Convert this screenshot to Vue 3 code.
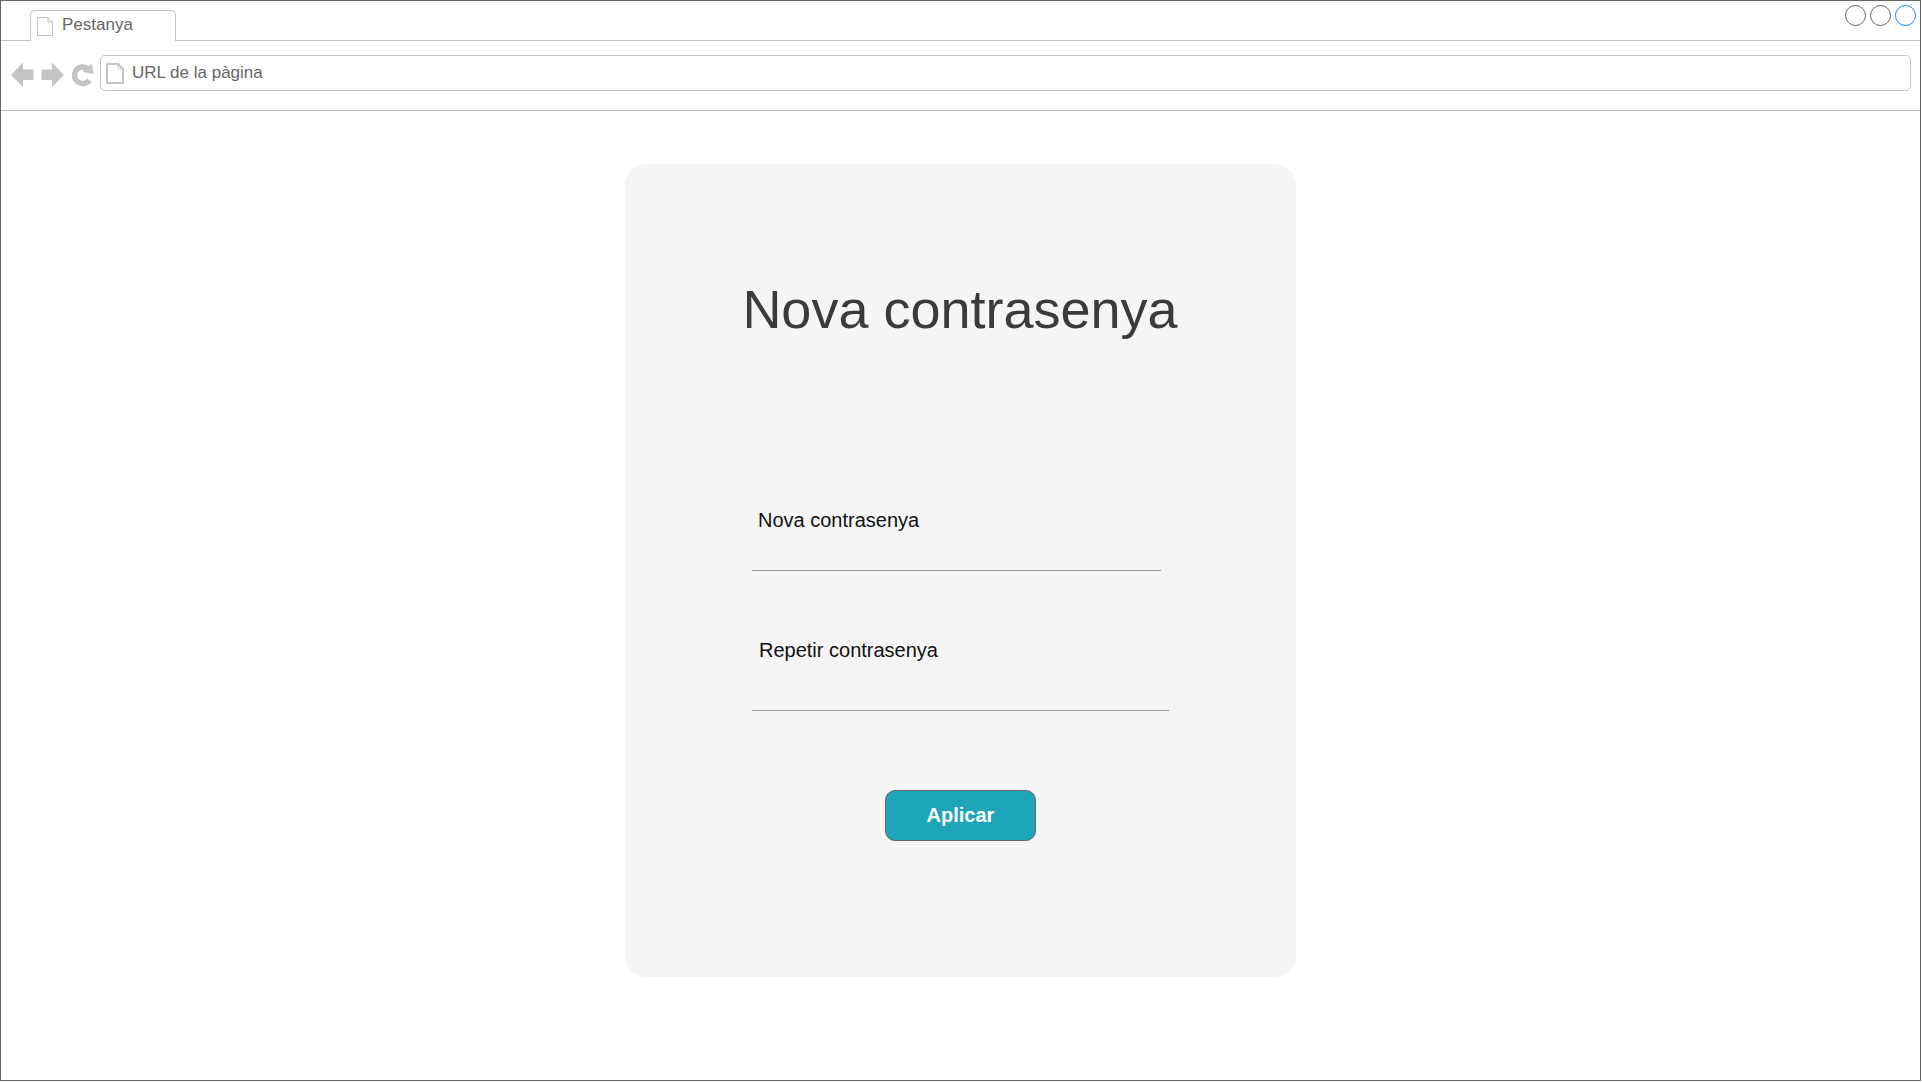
<script setup>
import { ref } from 'vue'

const url = ref('URL de la pàgina')
const password = ref('')
const repeated = ref('')
</script>

<template>
  <div class="window">
    <header>
      <div class="tab-bar">
        <div class="tab">
          <svg class="tab-icon" width="16" height="19" viewBox="0 0 16 19" aria-hidden="true">
            <path d="M.5.5H11L15.500 5V18.500H.5ZM11 .5V5H15.500" />
          </svg>
          <span>Pestanya</span>
        </div>
        <div class="controls">
          <button type="button" class="control" aria-label="Minimitza"></button>
          <button type="button" class="control" aria-label="Maximitza"></button>
          <button type="button" class="control active" aria-label="Tanca"></button>
        </div>
      </div>
      <div class="toolbar">
        <button type="button" class="nav" aria-label="Enrere">
          <svg width="23" height="26" viewBox="0 0 23 26"><path d="M0 13 12 .5V7.500H22.500V18H12V25Z" /></svg>
        </button>
        <button type="button" class="nav" aria-label="Endavant">
          <svg width="23" height="26" viewBox="0 0 23 26"><path d="M23 13 11 .5V7.500H.5V18H11V25Z" /></svg>
        </button>
        <button type="button" class="nav" aria-label="Recarrega">
          <svg width="22" height="26" viewBox="0 0 22 26">
            <path class="arc" d="M18.500 18.200A8.300 8.300 0 1 1 17 6.800" />
            <path d="M20.800 1.500 22.700 12.300 11.500 9.800Z" />
          </svg>
        </button>
        <label class="address">
          <svg class="page-icon" width="18" height="21" viewBox="0 0 18 21" aria-hidden="true">
            <path d="M1 1H12L17 6V20H1Z" />
            <path class="fold" d="M12 1V6H17" />
          </svg>
          <input v-model="url" type="text" aria-label="URL de la pàgina" />
        </label>
      </div>
    </header>
    <main>
      <form class="card" @submit.prevent>
        <h1>Nova contrasenya</h1>
        <div class="field">
          <label for="password">Nova contrasenya</label>
          <input id="password" v-model="password" type="password" />
        </div>
        <div class="field repeat">
          <label for="repeated">Repetir contrasenya</label>
          <input id="repeated" v-model="repeated" type="password" />
        </div>
        <button type="submit" class="apply">Aplicar</button>
      </form>
    </main>
  </div>
</template>

<style>
body {
  background: #fff;
}
</style>

<style scoped>
* {
  box-sizing: border-box;
}

.window {
  min-height: calc(100vh - 1px);
  margin-right: 1px;
  border: 1px solid #666;
  background: #fff;
  font-family: "Liberation Sans", Arial, sans-serif;
}

button,
input {
  margin: 0;
  padding: 0;
  border: 0;
  background: none;
  font: inherit;
  outline: none;
}

svg {
  display: block;
  overflow: visible;
}

.tab-bar {
  display: flex;
  justify-content: space-between;
  align-items: flex-end;
  height: 40px;
  padding: 0 4px 0 29px;
  border-bottom: 1px solid #c4c4c4;
}

.tab {
  display: flex;
  gap: 9px;
  width: 146px;
  height: 31px;
  margin-bottom: -1px;
  padding: 4px 6px 0;
  border: 1px solid #c4c4c4;
  border-bottom: 0;
  border-radius: 5px 5px 0 0;
  background: #fff;
  color: #666;
  font-size: 17px;
  line-height: 20px;
}

.tab-icon {
  margin-top: 2px;
  fill: none;
  stroke: #c4c4c4;
}

.controls {
  display: flex;
  align-self: flex-start;
  gap: 4px;
  padding-top: 4px;
}

.control {
  width: 21px;
  height: 21px;
  border: 1px solid #666;
  border-radius: 50%;
}

.active {
  border-color: #008cff;
}

.toolbar {
  display: flex;
  gap: 7px;
  padding: 14px 9px 19px 10px;
  border-bottom: 1px solid #c4c4c4;
}

.nav {
  display: flex;
  align-items: center;
}

.nav svg {
  margin-top: 4px;
  fill: #c4c4c4;
}

.nav .arc {
  fill: none;
  stroke: #c4c4c4;
  stroke-width: 5.500;
}

.address {
  display: flex;
  flex: 1;
  align-items: center;
  gap: 8px;
  height: 36px;
  padding: 0 5px;
  border: 1px solid #c4c4c4;
  border-radius: 5px;
}

.page-icon {
  fill: none;
  stroke: #c4c4c4;
  stroke-width: 2;
}

.page-icon .fold {
  stroke-width: 1;
}

.address input {
  flex: 1;
  min-width: 0;
  height: 20px;
  color: #666;
  font-size: 17px;
}

main {
  display: flex;
  justify-content: center;
  padding: 53px 16px;
}

.card {
  display: flex;
  flex-direction: column;
  width: 671px;
  padding: 115px 118px 136px 127px;
  border-radius: 21px;
  background: #f5f5f5;
}

h1 {
  margin: 0 0 169px;
  padding-right: 10px;
  color: #3b3b3b;
  font-size: 54px;
  font-weight: 400;
  line-height: 60px;
  text-align: center;
  white-space: nowrap;
  align-self: center;
}

.field {
  display: flex;
  flex-direction: column;
  width: 409px;
  max-width: 100%;
  margin-bottom: 67px;
  color: #111;
  font-size: 20px;
  line-height: 24px;
}

.field label {
  padding-left: 6px;
}

.field input {
  height: 39px;
  border-bottom: 1px solid #999;
}

.repeat {
  width: 417px;
  margin-bottom: 79px;
}

.repeat label {
  padding-left: 7px;
}

.repeat input {
  height: 49px;
}

.apply {
  align-self: center;
  width: 151px;
  height: 51px;
  margin-right: 9px;
  padding-bottom: 2px;
  border: 1px solid #666;
  border-radius: 10px;
  background: #1ea5b8;
  color: #fff;
  font-size: 20px;
  font-weight: 700;
  line-height: 24px;
}
</style>
